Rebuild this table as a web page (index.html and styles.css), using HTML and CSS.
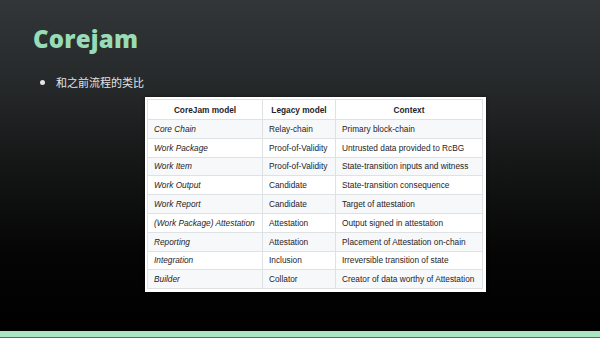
FILE: index.html
```html
<!DOCTYPE html>
<html>
<head>
<meta charset="utf-8">
<link rel="stylesheet" href="styles.css">
</head>
<body>
<div class="slide">
  <main class="content">
    <h1 class="title">Corejam</h1>
    <ul class="bullets">
      <li>和之前流程的类比</li>
    </ul>
    <div class="panel">
      <table class="map">
        <thead>
          <tr><th class="c1">CoreJam model</th><th class="c2">Legacy model</th><th class="c3">Context</th></tr>
        </thead>
        <tbody>
          <tr><td><em>Core Chain</em></td><td>Relay-chain</td><td>Primary block-chain</td></tr>
          <tr><td><em>Work Package</em></td><td>Proof-of-Validity</td><td>Untrusted data provided to RcBG</td></tr>
          <tr><td><em>Work Item</em></td><td>Proof-of-Validity</td><td>State-transition inputs and witness</td></tr>
          <tr><td><em>Work Output</em></td><td>Candidate</td><td>State-transition consequence</td></tr>
          <tr><td><em>Work Report</em></td><td>Candidate</td><td>Target of attestation</td></tr>
          <tr><td><em>(Work Package) Attestation</em></td><td>Attestation</td><td>Output signed in attestation</td></tr>
          <tr><td><em>Reporting</em></td><td>Attestation</td><td>Placement of Attestation on-chain</td></tr>
          <tr><td><em>Integration</em></td><td>Inclusion</td><td>Irreversible transition of state</td></tr>
          <tr><td><em>Builder</em></td><td>Collator</td><td>Creator of data worthy of Attestation</td></tr>
        </tbody>
      </table>
    </div>
  </main>
  <footer class="bar"></footer>
</div>
</body>
</html>
```
FILE: styles.css
```css
html, body {
  margin: 0;
  padding: 0;
  width: 600px;
  height: 338px;
  overflow: hidden;
}
.slide {
  width: 600px;
  height: 338px;
  display: flex;
  flex-direction: column;
  background: linear-gradient(180deg, #333638 0%, #26292a 25%, #141515 50%, #050505 75%, #000 100%);
}
.content {
  flex: 1;
  display: flex;
  flex-direction: column;
  padding: 0 0 0 33px;
}
.title {
  margin: 24px 0 0 0;
  font-family: "Open Sans", sans-serif;
  font-weight: 800;
  font-size: 24px;
  line-height: 30px;
  color: #97dcb6;
  letter-spacing: 0.2px;
}
.bullets {
  margin: 20px 0 0 0;
  padding: 0 0 0 23px;
  font-family: "Noto Sans CJK SC", sans-serif;
  font-size: 11px;
  line-height: 16px;
  color: #e4e4e4;
}
.bullets li::marker {
  font-size: 12px;
}
.panel {
  align-self: flex-start;
  margin: 7px 0 0 112px;
  background: #fff;
  padding: 2px 3px 3px 2px;
  box-shadow: 0 0 3px rgba(0,0,0,0.5);
}
.map {
  border-collapse: collapse;
  font-family: "Liberation Sans", Arial, sans-serif;
  font-size: 8.3px;
  color: #1f2328;
}
.map th, .map td {
  border: 1px solid #dfe2e5;
  padding: 0 6px;
  white-space: nowrap;
  text-align: left;
}
.map th {
  height: 19px;
  font-weight: bold;
  text-align: center;
  color: #1f2328;
}
.map td {
  height: 17.8px;
}
.map tbody tr:nth-child(odd) {
  background: #f6f8fa;
}
.c1 { width: 102px; }
.c2 { width: 60px; }
.c3 { width: 134px; }
.bar {
  height: 6px;
  background: #a9e5c1;
  border-bottom: 1px solid #3d7a55;
}
```
